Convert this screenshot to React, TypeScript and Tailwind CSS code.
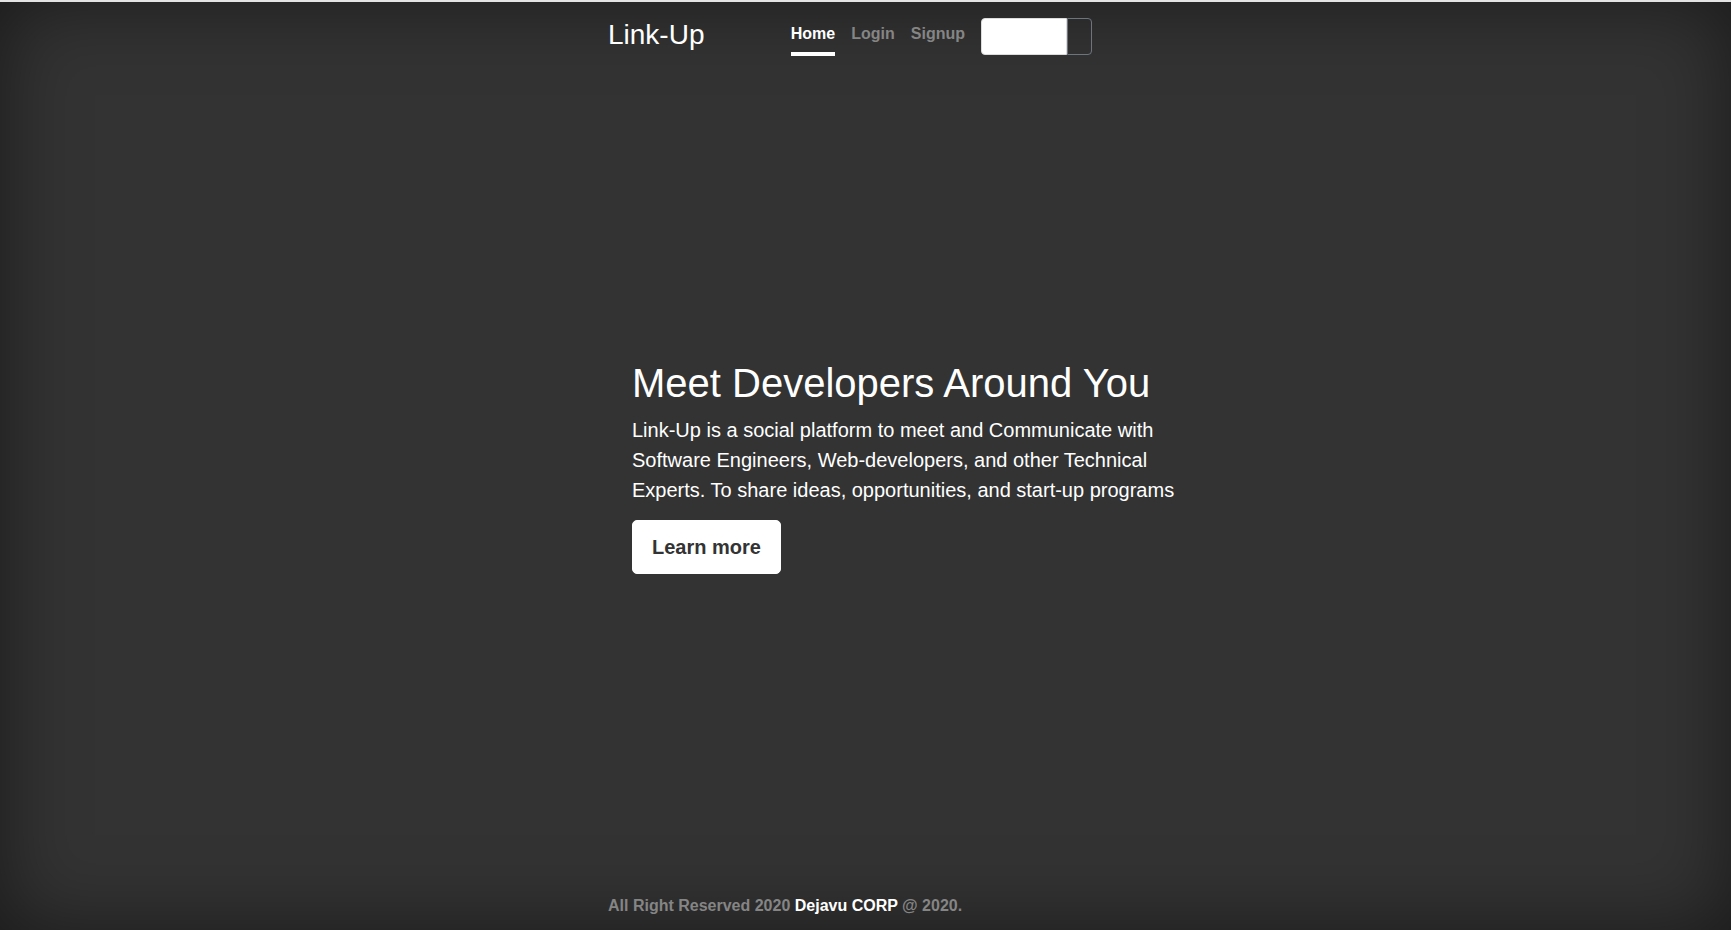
const navLinks = [
  { label: 'Home', active: true },
  { label: 'Login', active: false },
  { label: 'Signup', active: false },
];

export default function App() {
  return (
    <div
      className="flex h-[930px] min-h-screen flex-col bg-[#333333] text-white shadow-[inset_0_0_5rem_rgba(0,0,0,0.5)]"
      style={{ fontFamily: '"Liberation Sans", Arial, sans-serif' }}
    >
      <div className="h-[2px] w-full bg-[#e3e3e3]" />

      <div className="mx-auto flex w-[515px] flex-1 flex-col">
        {/* masthead */}
        <header className="flex items-start justify-between pr-[31px] pt-[16px]">
          <h3 className="text-[28px] leading-[1.2] font-normal">Link-Up</h3>
          <nav className="flex items-start">
            {navLinks.map((link, i) => (
              <a
                key={link.label}
                href="#"
                className={`border-b-4 pt-1 pb-[6px] text-base leading-6 font-bold ${
                  i > 0 ? 'ml-4' : ''
                } ${link.active ? 'border-white text-white' : 'border-transparent text-[#858585]'}`}
              >
                {link.label}
              </a>
            ))}
            <div className="ml-4 flex h-[37px]">
              <input
                type="text"
                aria-label="search"
                className="h-full w-[86px] rounded-l-[4px] border border-[#dcdcdc] bg-white outline-none"
              />
              <button
                type="button"
                aria-label="go"
                className="h-full w-[25px] rounded-r-[4px] border border-[#6c757d] bg-transparent"
              />
            </div>
          </nav>
        </header>

        {/* hero */}
        <main className="flex flex-1 flex-col justify-center pb-[17px]">
          <div className="ml-[24px] w-[560px]">
            <h1 className="mb-2 text-[40px] leading-[1.2] font-normal">
              Meet Developers Around You
            </h1>
            <p className="text-[20px] leading-[30px] font-light">
              Link-Up is a social platform to meet and Communicate with Software Engineers,
              Web-developers, and other Technical Experts. To share ideas, opportunities, and
              start-up programs
            </p>
            <button
              type="button"
              className="mt-[15px] rounded-[5px] border border-white bg-white px-[19px] py-[11px] text-[20px] leading-[30px] font-bold text-[#333333]"
            >
              Learn more
            </button>
          </div>
        </main>

        {/* footer */}
        <footer className="pb-[12px]">
          <p className="text-base leading-6 font-bold text-[#858585]">
            All Right Reserved 2020 <span className="text-white">Dejavu CORP</span> @ 2020.
          </p>
        </footer>
      </div>
    </div>
  );
}
